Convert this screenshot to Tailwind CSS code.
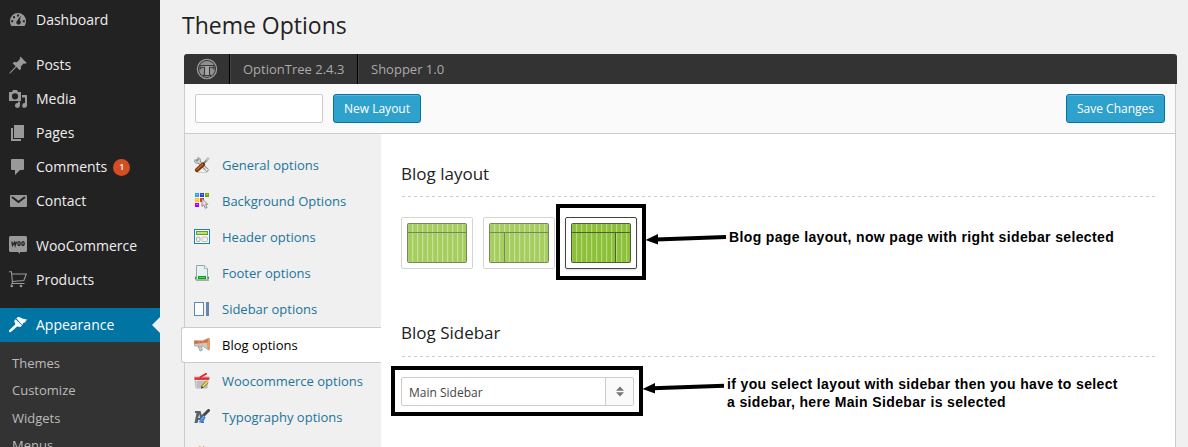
<!DOCTYPE html>
<html lang="en">
<head>
<meta charset="utf-8">
<title>Theme Options</title>
<script src="https://cdn.jsdelivr.net/npm/@tailwindcss/browser@4"></script>
</head>
<body class="relative flex h-[447px] w-[1188px] overflow-hidden bg-[#f0f0f0] font-['Open_Sans',sans-serif] text-[#222]">

<!-- Admin menu -->
<aside class="h-[447px] w-[160px] shrink-0 overflow-hidden bg-[#222] pt-[3px] text-[14px] text-[#eee]">
  <nav class="flex flex-col">
    <a class="flex h-[34px] items-center gap-2 pl-2"><svg class="size-5 text-[#999]" viewBox="0 0 20 20" fill="currentColor"><path fill-rule="evenodd" d="M3.500 16C2.600 14.700 2 13.200 2 11A8 8 0 0 1 18 11C18 13.200 17.400 14.700 16.500 16ZM9 4.500h2v2H9ZM5 6.200h2v2H5ZM3.200 10.300h2v2h-2ZM14.800 10.300h2v2h-2ZM12.900 5.500l-1 5c1 .6 1.200 2 .6 3-.8 1.300-2.500 1.500-3.500.5-1-1-.9-2.800.4-3.600Z"/></svg><span class="pb-0.5">Dashboard</span></a>
    <a class="mt-[11px] flex h-[34px] items-center gap-2 pl-2"><svg class="size-5 text-[#999]" viewBox="0 0 20 20" fill="currentColor"><path d="M12.300 1.600 18.800 8 16.900 8.800 15.600 8.600 12.900 11.400 13 13.800 11.700 15.200 8.500 12.100 2.900 17.700 1 18.900 2.200 17 7.700 11.200 4.600 8.200 6.200 7 8.800 7.200 11.600 4.400Z"/></svg><span class="pb-0.5">Posts</span></a>
    <a class="flex h-[34px] items-center gap-2 pl-2"><svg class="size-5 text-[#999]" viewBox="0 0 20 20" fill="currentColor"><path fill-rule="evenodd" d="M1 3h3l1-2h4l1 2h3v9H1ZM7 4.200a3.100 3.100 0 1 0 0 6.200 3.100 3.100 0 0 0 0-6.200"/><path d="M14 6h5v10.500a2.400 2.400 0 1 1-2-2.400V8.500h-3ZM12 12.500v4a2.500 2.500 0 1 1-2-2.500V12.500Z"/></svg><span class="pb-0.5">Media</span></a>
    <a class="flex h-[34px] items-center gap-2 pl-2"><svg class="size-5 text-[#999]" viewBox="0 0 20 20" fill="currentColor"><path d="M6 2h10v13H6ZM3 5h2v11h8v2H3Z"/></svg><span class="pb-0.5">Pages</span></a>
    <a class="flex h-[34px] items-center gap-2 pl-2"><svg class="size-5 text-[#999]" viewBox="0 0 20 20" fill="currentColor"><path d="M4 2h11q1 0 1 1v9q0 1-1 1h-3l-5 5v-5H4q-1 0-1-1V3q0-1 1-1"/></svg><span class="pb-0.5">Comments</span><span class="-ml-0.5 flex h-[17px] w-[17px] items-center justify-center rounded-full bg-[#d54e21] text-[9px] font-semibold text-white">1</span></a>
    <a class="flex h-[34px] items-center gap-2 pl-2"><svg class="size-5" viewBox="0 0 20 20"><rect x="2" y="4" width="17" height="12" rx="1" fill="#999"/><path d="m4 6 6.500 5L17 6" fill="none" stroke="#222" stroke-width="2"/></svg><span class="pb-0.5">Contact</span></a>
    <a class="mt-[11px] flex h-[34px] items-center gap-2 pl-2"><svg class="size-5" viewBox="0 0 20 20"><path d="M2.500 0h15Q19 0 19 1.500v13q0 1.500-1.500 1.500H12v2l-2-2H2.500Q1 16 1 14.500v-13Q1 0 2.500 0" fill="#999"/><path d="m3.800 5.500.8 4L6.500 6.200l.7 3.300 1.300-4" fill="none" stroke="#222" stroke-width="1.300"/><ellipse cx="11" cy="7.600" rx="1.200" ry="1.900" fill="none" stroke="#222" stroke-width="1.300"/><ellipse cx="15" cy="7.600" rx="1.200" ry="1.900" fill="none" stroke="#222" stroke-width="1.300"/></svg><span class="pb-0.5">WooCommerce</span></a>
    <a class="flex h-[34px] items-center gap-2 pl-2"><svg class="size-5" viewBox="0 0 20 20" fill="none" stroke="#999" stroke-width="1.100"><path d="M1 1.800h2.500L4.500 13.500h12M4 4h14.300l-2.500 6.500-11.500 1"/><path d="M3.500 13.500v1.200" /><circle cx="3.800" cy="16" r=".8" fill="#999"/><circle cx="13" cy="16" r=".8" fill="#999"/></svg><span class="pb-0.5">Products</span></a>
    <a class="relative mt-[11px] flex h-[34px] items-center gap-2 bg-[#0074a2] pl-2 text-white"><svg class="size-5" viewBox="0 0 20 20" fill="#fff"><path d="M8.300 3.300Q10 1.500 12 2.300l2.200 1.300 5.200 1.200-2 1.300.3 1.200-2.200.4-1.300 2.400Z"/><path d="m7.500 4.200 6.500 6.200-1.600 1.500-3.300-.3-5.600 5q-1.700 1.300-2.400.2-.4-1.200.8-2.200L7.400 9.200 6.200 5.900Z"/></svg><span class="pb-0.5">Appearance</span>
      <i class="absolute top-[9px] right-0 border-y-8 border-r-8 border-y-transparent border-r-[#f0f0f0]"></i></a>
  </nav>
  <nav class="flex h-[105px] flex-col overflow-hidden bg-[#333] pt-2 pl-3 text-[13px] leading-[27.300px] text-[#bbb]">
    <a>Themes</a><a>Customize</a><a>Widgets</a><a>Menus</a>
  </nav>
</aside>

<main class="flex w-[1028px] flex-col">
  <h1 class="h-[54px] pt-[9px] pl-[22px] text-[23px] leading-[32px]">Theme Options</h1>

  <header class="ml-6 flex h-[30px] w-[993px] shrink-0 items-center rounded-t-[3px] bg-[#333] text-[13px] text-[#aaa]">
    <div class="flex h-full w-[46px] items-center justify-center border-r border-black"><svg class="size-[22px]" viewBox="0 0 22 22"><circle cx="11" cy="11" r="9.600" fill="none" stroke="#999" stroke-width="1.300"/><circle cx="11" cy="11" r="8" fill="#909090"/><path d="M4 7.500h14v3.300l-1.500-1.500h-3v7l1 1.200h-7l1-1.200v-7h-3L4 10.800Z" fill="#a5a5a5" stroke="#3a3a3a" stroke-width="1.100"/></svg></div>
    <div class="flex h-full w-[128px] items-center border-r border-black border-l border-l-[#444] pt-0.5 pl-3">OptionTree 2.4.3</div>
    <div class="flex h-full items-center border-l border-[#444] pt-0.5 pl-3">Shopper 1.0</div>
  </header>

  <section class="ml-6 flex h-[363px] w-[992px] shrink-0 flex-col border-x border-[#ccc]">
    <div class="flex h-[50px] shrink-0 items-center gap-2.5 border-b border-[#ccc] bg-[#fafafa] px-2.5 text-[12px]">
      <div class="h-[29px] w-[128px] rounded-[2px] border border-[#ccc] bg-white"></div>
      <div class="flex h-[29px] w-[88px] items-center justify-center rounded-[3px] border border-[#0074a2] bg-[#2ea2cc] text-white shadow-[inset_0_1px_0_rgba(120,200,230,0.5)]">New Layout</div>
      <div class="ml-auto flex h-[29px] w-[99px] items-center justify-center rounded-[3px] border border-[#0074a2] bg-[#2ea2cc] text-white shadow-[inset_0_1px_0_rgba(120,200,230,0.5)]">Save Changes</div>
    </div>
    <div class="flex h-[313px] overflow-y-clip">
      <!-- Section tabs -->
      <nav class="flex w-[196px] shrink-0 flex-col pt-[13px] text-[13px] text-[#21759b]">
        <a class="flex h-9 shrink-0 items-center gap-3 pl-[9px]"><svg class="size-4" viewBox="0 0 16 16"><path d="M3 15.500h10" stroke="#ccc"/><path d="M3.500 3.500 13 13" stroke="#87938f" stroke-width="3.400" stroke-linecap="round"/><path d="M1 2.500 3 4.500 5 2.500 3.500.8C6 .5 7 2 6.500 4.500L4 6.500Q1 6.500.5 4.500Z" fill="#c9d3d0" stroke="#7b8784" stroke-width=".7"/><path d="m4 4 8.500 8.500" stroke="#d5dddb" stroke-width="1.600"/><circle cx="12.700" cy="12.800" r="1" fill="#fff"/><path d="m8 8 6-6" stroke="#818c89" stroke-width="2"/><path d="m12.300 3.500 2.500-2.800" stroke="#b8c2bf" stroke-width="2.400"/><path d="m3 13 6-5.500" stroke="#7a3300" stroke-width="4.200" stroke-linecap="round"/><path d="m3 12.500 5.500-5" stroke="#c76a2a" stroke-width="1.600" stroke-linecap="round"/></svg><span class="pt-0.5">General options</span></a>
        <a class="flex h-9 shrink-0 items-center gap-3 pl-[9px]"><svg class="size-4" viewBox="0 0 16 16"><path fill="#18a8ff" d="M1 0h4v4H1z"/><path fill="#343edb" d="M6 0h4v4H6z"/><path fill="#6dac00" d="M11 0h4v4h-4z"/><path fill="#ffcb0b" d="M1 5h4v4H1z"/><path fill="#ee3524" d="M6 5h4v4H6z"/><path fill="#b200ef" d="M1 10h4v4H1z"/><path fill="#fff" fill-opacity=".35" d="M2 1h2v1H2zM7 1h2v1H7zM12 1h2v1h-2zM2 6h2v1H2zM2 11h2v1H2z"/><path d="M8 5.500v8l1.800-1.600 1.500 3.400 1.800-.8-1.500-3.200h2.200Z" fill="#e4e4e4" stroke="#777" stroke-width=".8"/></svg><span class="pt-0.5">Background Options</span></a>
        <a class="flex h-9 shrink-0 items-center gap-3 pl-[9px]"><svg class="size-4" viewBox="0 0 16 16"><rect x=".5" y=".5" width="15" height="14" fill="#fff" stroke="#1583b4"/><rect x="2.500" y="2.500" width="11" height="3" fill="#bfe36a" stroke="#669c25"/><rect x="2.500" y="8" width="3.500" height="4.500" rx=".7" fill="#eee" stroke="#aaa"/><rect x="8" y="8" width="5.500" height="4.500" rx=".7" fill="#f2f2f2" stroke="#bbb"/></svg><span class="pt-0.5">Header options</span></a>
        <a class="flex h-9 shrink-0 items-center gap-3 pl-[9px]"><svg class="size-4" viewBox="0 0 16 16"><path d="M2 15.500h13" stroke="#aaa"/><path d="M2.500.5h8l3 3.200v11h-11Z" fill="#e6f1f0" stroke="#94a6a8"/><path d="M10.500.5v3.200h3" fill="#fff" stroke="#94a6a8" stroke-width=".8"/><rect x="4.500" y="11.500" width="7" height="2" fill="#4be34d" stroke="#0c9b16"/><path d="M1 11v4l1.500-2ZM15 11v4l-1.500-2Z" fill="#19a522"/></svg><span class="pt-0.5">Footer options</span></a>
        <a class="flex h-9 shrink-0 items-center gap-3 pl-[9px]"><svg class="size-4" viewBox="0 0 16 16"><rect x=".5" y="1.500" width="9" height="13" fill="#fafcff" stroke="#6289ad"/><path d="M12 1h3v14h-3z" fill="#6289ad"/></svg><span class="pt-0.5">Sidebar options</span></a>
        <a class="-ml-1 flex h-9 shrink-0 items-center gap-3 rounded-l-[3px] border border-r-0 border-[#ccc] bg-white pl-3 text-black"><svg class="size-4" viewBox="0 0 16 16"><path d="m4 9 2 5 2.500-1L7 9" fill="#c5ccca" stroke="#86918f" stroke-width=".7"/><path d="M.5 3.500 9 3.800 15 1.200v12L9 9.500.5 9Z" fill="#c5cbc9" stroke="#99a09e" stroke-width=".7"/><path d="M.3 4h8.500l5-2.500v4L.3 7Z" fill="#df6a32"/><path d="M5 4v5M8.800 4v5.500" stroke="#e3aa8d" stroke-width=".7"/><ellipse cx="14.700" cy="7" rx="1" ry="5.800" fill="#f4a45c" stroke="#c77745" stroke-width=".5"/></svg><span class="pt-0.5">Blog options</span></a>
        <a class="flex h-9 shrink-0 items-center gap-3 pl-[9px]"><svg class="size-4" viewBox="0 0 16 16"><path d="M1 6h13l-1 9H2Z" fill="#fff" stroke="#aaa" stroke-width=".8"/><path d="M1.500 9h12M2 11h11M2 13h11M4 7v8M6 7v8M8 7v8M10 7v8M12 7v8" stroke="#999" stroke-width=".8"/><path d="M.5 5.300h14.800" stroke="#d92731" stroke-width="3"/><path d="M1 4.600h14" stroke="#ff7b7d" stroke-width=".8"/><path d="M6.500 4 12 .9" stroke="#e22c35" stroke-width="2" stroke-linecap="round"/><path d="m8.500 13.800 5-5.300" stroke="#8f7416" stroke-width="3"/><path d="m8.800 13.500 4.700-5" stroke="#ffe457" stroke-width="1.500"/><path d="m7 15.500.5-2.500 2 1.700Z" fill="#333"/></svg><span class="pt-0.5">Woocommerce options</span></a>
        <a class="flex h-9 shrink-0 items-center gap-3 pl-[9px]"><svg class="size-4" viewBox="0 0 16 16"><path d="M1 2h5.500l3.500 12H7l-.6-3H4.300L3.500 14H.5L2.500 4H1Z" fill="#59616b"/><path d="M4 9h2L5.300 5Z" fill="#ddd"/><path d="m9 7 5.500-5.500" stroke="#43484e" stroke-width="3" stroke-linecap="round"/><path d="m5.500 12 3.800-6 2.300 2.300-2 4.200q-3 2-5 .4Z" fill="#3b8be6"/><path d="m7 10.500 3-3.500" stroke="#86bffb"/></svg><span class="pt-0.5">Typography options</span></a>
        <a class="flex h-9 shrink-0 items-center gap-3 pl-[9px]"><svg class="size-4" viewBox="0 0 16 16"><path d="m3 3.500 3-3 5 10" fill="#c7b08b"/><path d="m9 .5 3 3-2 3Z" fill="#eb8a38"/></svg></a>
      </nav>

      <!-- Settings -->
      <div class="flex w-[794px] flex-col bg-white px-5 pt-7">
        <h2 class="h-[34px] text-[17px] leading-6">Blog layout</h2>
        <div class="h-px w-[755px] shrink-0 bg-[repeating-linear-gradient(90deg,transparent_0_1px,#ccc_1px_4px,transparent_4px_6px)]"></div>
        <div class="mt-5 flex shrink-0 gap-2.5">
          <div class="h-[52px] w-[72px] rounded-[2px] border border-[#d5d5d5] p-[5px]">
            <svg class="h-10 w-[60px]" viewBox="0 0 60 40"><defs><pattern id="stripe" width="5" height="40" patternUnits="userSpaceOnUse"><path d="M0 0h5v40H0z" fill="#a5ce5f"/><path d="M0 0h1.200v40H0z" fill="#c6e198"/></pattern></defs><rect x=".5" y=".5" width="59" height="39" rx="1" fill="url(#stripe)" stroke="#788562"/><path d="M0 9.500h60" stroke="#788562"/></svg></div>
          <div class="h-[52px] w-[72px] rounded-[2px] border border-[#d5d5d5] p-[5px]">
            <svg class="h-10 w-[60px]" viewBox="0 0 60 40"><rect x=".5" y=".5" width="59" height="39" rx="1" fill="url(#stripe)" stroke="#788562"/><path d="M0 9.500h60M15.500 10v30" stroke="#788562"/></svg></div>
          <div class="h-[52px] w-[72px] rounded-[2px] border border-[#444] p-[5px] shadow-[0_1px_2px_#ddd]">
            <svg class="h-10 w-[60px]" viewBox="0 0 60 40"><defs><pattern id="stripeActive" width="5" height="40" patternUnits="userSpaceOnUse"><path d="M0 0h5v40H0z" fill="#8dc03a"/><path d="M0 0h1.200v40H0z" fill="#b6da78"/></pattern></defs><rect x=".5" y=".5" width="59" height="39" rx="1" fill="url(#stripeActive)" stroke="#4f5f38"/><path d="M0 9.500h60M44.500 10v30" stroke="#4f5f38"/></svg></div>
        </div>
        <h2 class="mt-[52px] h-[35px] text-[17px] leading-6">Blog Sidebar</h2>
        <div class="h-px w-[755px] shrink-0 bg-[repeating-linear-gradient(90deg,transparent_0_1px,#ccc_1px_4px,transparent_4px_6px)]"></div>
        <div class="mt-5 flex h-[29px] w-[233px] shrink-0 rounded-[2px] border border-[#ccc] text-[12px] text-[#444]">
          <span class="flex flex-1 items-center pt-0.5 pl-[7px]">Main Sidebar</span>
          <span class="flex w-7 items-center justify-center border-l border-[#ccc] bg-[#fafafa]"><svg class="h-[11px] w-2" viewBox="0 0 8 11" fill="#777"><path d="M4 .5 8 4.700H0ZM0 6.300h8L4 10.500Z"/></svg></span>
        </div>
      </div>
    </div>
  </section>
</main>

<!-- Callouts drawn over the panel -->
<div class="absolute top-[204px] left-[556px] h-[76px] w-[90px] border-4 border-black"></div>
<div class="absolute top-[366px] left-[391px] h-[50px] w-[252px] border-4 border-black"></div>
<svg class="absolute top-0 left-0 h-[447px] w-[1188px]" viewBox="0 0 1188 447"><path d="m656 239.500 70-2.500M653 388.300l71-2.600" stroke="#000" stroke-width="4"/><path d="m645.500 240 12.500-6v10.500ZM642.500 389l12.500-6v10.500Z"/></svg>
<p class="absolute top-[228px] left-[729px] font-['Liberation_Sans',sans-serif] text-[14px] leading-[18px] font-bold tracking-[0.36px] whitespace-nowrap text-black">Blog page layout, now page with right sidebar selected</p>
<p class="absolute top-[375px] left-[727px] font-['Liberation_Sans',sans-serif] text-[14px] leading-[18px] font-bold tracking-[0.36px] whitespace-nowrap text-black">if you select layout with sidebar then you have to select<br>a sidebar, here Main Sidebar is selected</p>
</body>
</html>
